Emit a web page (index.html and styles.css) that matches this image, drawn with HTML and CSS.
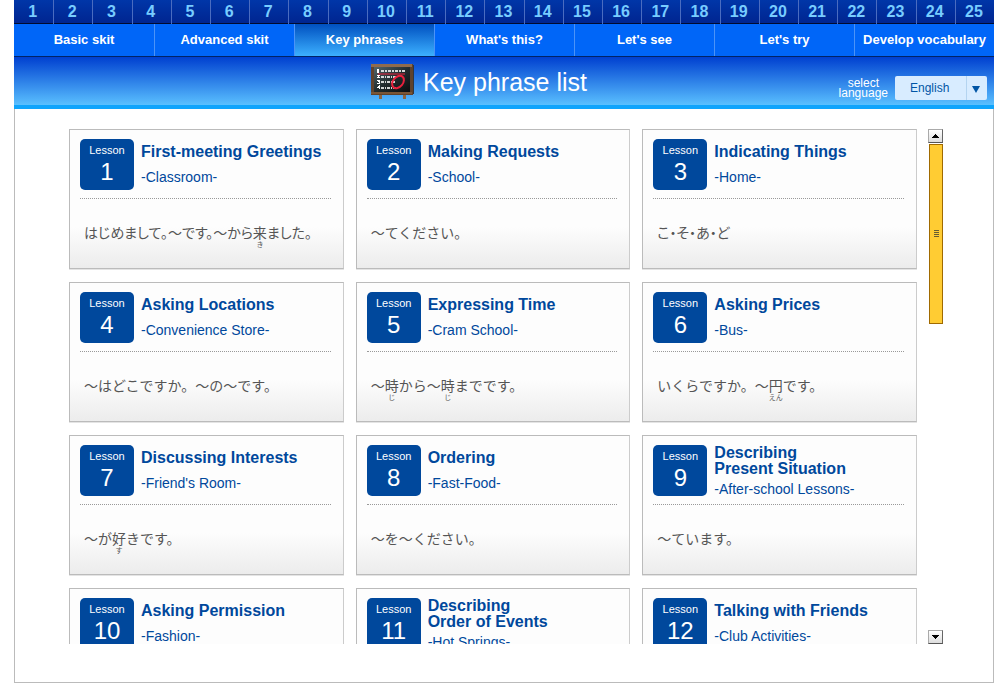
FILE: index.html
```html
<!DOCTYPE html>
<html lang="en">

<head>
    <meta charset="UTF-8">
    <meta name="viewport" content="width=device-width, initial-scale=1.0">
    <title>Key phrase list</title>
    <link rel="stylesheet" href="styles.css">
</head>

<body>
    <nav class="lessons" aria-label="Lessons">
        <a href="#1">1</a>
        <a href="#2">2</a>
        <a href="#3">3</a>
        <a href="#4">4</a>
        <a href="#5">5</a>
        <a href="#6">6</a>
        <a href="#7">7</a>
        <a href="#8">8</a>
        <a href="#9">9</a>
        <a href="#10">10</a>
        <a href="#11">11</a>
        <a href="#12">12</a>
        <a href="#13">13</a>
        <a href="#14">14</a>
        <a href="#15">15</a>
        <a href="#16">16</a>
        <a href="#17">17</a>
        <a href="#18">18</a>
        <a href="#19">19</a>
        <a href="#20">20</a>
        <a href="#21">21</a>
        <a href="#22">22</a>
        <a href="#23">23</a>
        <a href="#24">24</a>
        <a href="#25">25</a>
    </nav>

    <nav class="tabs" aria-label="Sections">
        <a href="#basic">Basic skit</a>
        <a href="#advanced">Advanced skit</a>
        <a href="#phrases" class="active">Key phrases</a>
        <a href="#what">What's this?</a>
        <a href="#see">Let's see</a>
        <a href="#try">Let's try</a>
        <a href="#vocabulary">Develop vocabulary</a>
    </nav>

    <header class="header">
        <div class="title">
            <svg class="board" width="44" height="37" viewBox="0 0 44 37" aria-hidden="true">
                <defs>
                    <linearGradient id="slate" x1="0" y1="0" x2="1" y2="1">
                        <stop offset="0" stop-color="#52666a" />
                        <stop offset="0.5" stop-color="#222c2f" />
                        <stop offset="1" stop-color="#0b0d0e" />
                    </linearGradient>
                </defs>
                <path d="M8 30h3v6h-3zM32 30h3v6h-3z" fill="#8c6542" />
                <path d="M41 2h2v29h-2z" fill="#33363f" />
                <path d="M0 1h42v31h-42z" fill="#5f422d" />
                <path d="M0 1h41v3h-41z" fill="#8f6b4c" />
                <path d="M0 29h41v2h-41z" fill="#7a5536" />
                <path d="M3 4h36v25h-36z" fill="url(#slate)" />
                <g fill="#fff">
                    <path d="M6 6h2v4h-2zM6 12h3v1h-1v1h1v1h-3v-1h1v-1h-1zM6 17h3v4h-3v-1h2v-1h-1v-1h-1zM8 22h1v4h-1v-1h-2v-1h1v-1h1z" />
                </g>
                <g fill="none" stroke="#fff" stroke-opacity="0.8" stroke-width="2">
                    <path d="M10 8h24" stroke-dasharray="3 1 2 1" />
                    <path d="M10 14h16M10 19h14M10 25h17" stroke-dasharray="3 1 1 1" />
                </g>
                <g fill="none" stroke="#e8203c">
                    <path d="M7 11h27" />
                    <ellipse cx="27" cy="19" rx="7" ry="5" transform="rotate(-50 27 19)" stroke-width="2" />
                </g>
            </svg>
            <h1>Key phrase list</h1>
        </div>
        <div class="language">
            <label for="language">select<br>language</label>
            <div class="select">
                <select id="language">
                    <option>English</option>
                </select>
                <svg width="8" height="7" viewBox="0 0 8 7" aria-hidden="true">
                    <path d="M0 0h8l-4 7z" fill="#0055a5" />
                </svg>
            </div>
        </div>
    </header>

    <main class="content">
        <div class="list">
            <a class="card" href="#1">
                <div class="top">
                    <div class="badge">Lesson <b>1</b></div>
                    <div class="name">
                        <h2>First-meeting Greetings</h2>
                        <p>-Classroom-</p>
                    </div>
                </div>
                <p class="phrase tight" lang="ja">はじめまして。～です。～から<ruby>来<rt>き</rt></ruby>ました。</p>
            </a>
            <a class="card" href="#2">
                <div class="top">
                    <div class="badge">Lesson <b>2</b></div>
                    <div class="name">
                        <h2>Making Requests</h2>
                        <p>-School-</p>
                    </div>
                </div>
                <p class="phrase" lang="ja">～てください。</p>
            </a>
            <a class="card" href="#3">
                <div class="top">
                    <div class="badge">Lesson <b>3</b></div>
                    <div class="name">
                        <h2>Indicating Things</h2>
                        <p>-Home-</p>
                    </div>
                </div>
                <p class="phrase tight" lang="ja">こ・そ・あ・ど</p>
            </a>
            <a class="card" href="#4">
                <div class="top">
                    <div class="badge">Lesson <b>4</b></div>
                    <div class="name">
                        <h2>Asking Locations</h2>
                        <p>-Convenience Store-</p>
                    </div>
                </div>
                <p class="phrase" lang="ja">～はどこですか。～の～です。</p>
            </a>
            <a class="card" href="#5">
                <div class="top">
                    <div class="badge">Lesson <b>5</b></div>
                    <div class="name">
                        <h2>Expressing Time</h2>
                        <p>-Cram School-</p>
                    </div>
                </div>
                <p class="phrase" lang="ja">～<ruby>時<rt>じ</rt></ruby>から～<ruby>時<rt>じ</rt></ruby>までです。</p>
            </a>
            <a class="card" href="#6">
                <div class="top">
                    <div class="badge">Lesson <b>6</b></div>
                    <div class="name">
                        <h2>Asking Prices</h2>
                        <p>-Bus-</p>
                    </div>
                </div>
                <p class="phrase" lang="ja">いくらですか。～<ruby>円<rt>えん</rt></ruby>です。</p>
            </a>
            <a class="card" href="#7">
                <div class="top">
                    <div class="badge">Lesson <b>7</b></div>
                    <div class="name">
                        <h2>Discussing Interests</h2>
                        <p>-Friend's Room-</p>
                    </div>
                </div>
                <p class="phrase" lang="ja">～が<ruby>好<rt>す</rt></ruby>きです。</p>
            </a>
            <a class="card" href="#8">
                <div class="top">
                    <div class="badge">Lesson <b>8</b></div>
                    <div class="name">
                        <h2>Ordering</h2>
                        <p>-Fast-Food-</p>
                    </div>
                </div>
                <p class="phrase" lang="ja">～を～ください。</p>
            </a>
            <a class="card" href="#9">
                <div class="top">
                    <div class="badge">Lesson <b>9</b></div>
                    <div class="name">
                        <h2>Describing<br>Present Situation</h2>
                        <p>-After-school Lessons-</p>
                    </div>
                </div>
                <p class="phrase" lang="ja">～ています。</p>
            </a>
            <a class="card" href="#10">
                <div class="top">
                    <div class="badge">Lesson <b>10</b></div>
                    <div class="name">
                        <h2>Asking Permission</h2>
                        <p>-Fashion-</p>
                    </div>
                </div>
            </a>
            <a class="card" href="#11">
                <div class="top">
                    <div class="badge">Lesson <b>11</b></div>
                    <div class="name">
                        <h2>Describing<br>Order of Events</h2>
                        <p>-Hot Springs-</p>
                    </div>
                </div>
            </a>
            <a class="card" href="#12">
                <div class="top">
                    <div class="badge">Lesson <b>12</b></div>
                    <div class="name">
                        <h2>Talking with Friends</h2>
                        <p>-Club Activities-</p>
                    </div>
                </div>
            </a>
        </div>

        <div class="scroller">
            <button type="button" aria-label="Scroll up">
                <svg width="7" height="4" viewBox="0 0 7 4" aria-hidden="true">
                    <path d="M3 0h1v1h1v1h1v1h1v1h-7v-1h1v-1h1v-1h1z" />
                </svg>
            </button>
            <div class="track">
                <div class="thumb">
                    <svg width="5" height="7" viewBox="0 0 5 7" aria-hidden="true">
                        <path d="M0 0h5v1h-5zM0 2h5v1h-5zM0 4h5v1h-5zM0 6h5v1h-5z" fill="#665c33" />
                    </svg>
                </div>
            </div>
            <button type="button" aria-label="Scroll down">
                <svg width="7" height="4" viewBox="0 0 7 4" aria-hidden="true">
                    <path d="M0 0h7v1h-1v1h-1v1h-1v1h-1v-1h-1v-1h-1v-1h-1z" />
                </svg>
            </button>
        </div>
    </main>
</body>

</html>
```

FILE: styles.css
```css
:root {
    --navy: #00489c;
    --blue: #0066f8;
    --line: #bbb;
}

* {
    box-sizing: border-box;
}

body {
    display: flex;
    flex-direction: column;
    height: 100vh;
    margin: 0 14px;
    background: #fff;
    font-family: "Liberation Sans", Arial, sans-serif;
}

h1,
h2,
p {
    margin: 0;
}

a {
    color: inherit;
    text-decoration: none;
}

/* lesson numbers */
.lessons {
    display: grid;
    grid-template-columns: repeat(25, 1fr);
    height: 24px;
    border-bottom: 1px solid #000b30;
    background: linear-gradient(#0036a8, #002590);
    color: #7cf;
    font-size: 16px;
    font-weight: bold;
    line-height: 24px;
    text-align: center;
}

.lessons a {
    padding-right: 2px;
}

.lessons a + a {
    border-left: 1px solid #4a6cc0;
}

/* section tabs */
.tabs {
    display: grid;
    grid-template-columns: repeat(7, 1fr);
    height: 33px;
    border-bottom: 1px solid #002468;
    background: var(--blue);
    color: #fff;
    font-size: 13px;
    font-weight: bold;
    line-height: 32px;
    text-align: center;
    white-space: nowrap;
}

.tabs a + a {
    border-left: 1px solid #4b93f8;
}

.tabs .active {
    background: linear-gradient(#0050c0, #3cb0ff);
}

/* page header */
.header {
    display: grid;
    grid-template-columns: 1fr auto 1fr;
    align-items: center;
    height: 52px;
    border-bottom: 4px solid #0fa4fc;
    background: linear-gradient(#0040d0, #5ac0ff);
    color: #fff;
}

.title {
    display: flex;
    grid-column: 2;
    align-items: center;
    gap: 8px;
    margin-right: 50px;
}

.title h1 {
    padding-top: 2px;
    font-size: 25px;
    font-weight: normal;
    line-height: 30px;
}

.language {
    display: flex;
    align-items: center;
    align-self: end;
    justify-content: flex-end;
    gap: 7px;
    padding: 0 7px 5px 0;
}

.language label {
    font-size: 12px;
    line-height: 10px;
    text-align: center;
}

.select {
    display: grid;
    align-items: center;
    width: 92px;
}

.select select,
.select svg {
    grid-area: 1 / 1;
}

.select select {
    appearance: none;
    width: 100%;
    height: 24px;
    padding: 0 0 0 15px;
    border: 0;
    border-radius: 2px;
    background: linear-gradient(to right, #d8ecff 71px, #b4d4f0 71px, #b4d4f0 72px, #d8ecff 72px);
    color: #0055a5;
    font-family: inherit;
    font-size: 12px;
}

.select svg {
    justify-self: end;
    margin-top: 2px;
    margin-right: 7px;
    pointer-events: none;
}

/* lesson list */
.content {
    display: flex;
    flex: 1;
    gap: 11px;
    min-height: 0;
    padding: 20px 50px 38px 54px;
    border: 1px solid var(--line);
    border-top: 0;
}

.list {
    display: grid;
    flex: 1;
    grid-template-columns: repeat(3, 1fr);
    align-content: start;
    gap: 13px 12px;
    overflow: hidden;
}

.card {
    min-height: 140px;
    padding: 9px 12px 0 10px;
    border: 1px solid var(--line);
    border-right-color: #ccc;
    background: linear-gradient(#fdfdfd 70%, #ececec);
    box-shadow: 0 1px #e4e4e4;
    color: var(--navy);
}

.top {
    display: flex;
    gap: 7px;
    padding-bottom: 8px;
    border-bottom: 1px dotted #999;
}

.badge {
    width: 54px;
    height: 51px;
    padding-top: 4px;
    border-radius: 5px;
    background: var(--navy);
    color: #fff;
    font-size: 11px;
    line-height: 14px;
    text-align: center;
}

.badge b {
    display: block;
    font-size: 24px;
    font-weight: normal;
    line-height: 30px;
}

.name {
    display: flex;
    flex-direction: column;
    justify-content: space-evenly;
    gap: 4px;
    height: 51px;
    white-space: nowrap;
}

.name h2 {
    font-size: 16px;
    line-height: 16px;
}

.name p {
    font-size: 14px;
    line-height: 16px;
}

.phrase {
    padding: 23px 0 0 4px;
    color: #555;
    font-family: "Noto Sans CJK JP", sans-serif;
    font-size: 14px;
    line-height: 20px;
    white-space: nowrap;
}

.tight {
    font-feature-settings: "palt";
}

ruby {
    ruby-position: under;
}

rt {
    font-size: 7px;
    line-height: 10px;
}

/* scroll bar */
.scroller {
    display: flex;
    flex-direction: column;
    width: 15px;
}

.scroller button {
    display: flex;
    align-items: center;
    justify-content: center;
    width: 15px;
    height: 14px;
    padding: 0;
    border: 1px solid #999;
    border-color: #aaa #666 #555 #aaa;
    background: linear-gradient(#fff, #ddd);
}

.track {
    flex: 1;
    padding: 1px 0 0 1px;
}

.thumb {
    display: flex;
    align-items: center;
    justify-content: center;
    height: 37%;
    border: 1px solid #a06a00;
    background: #fc3;
}
```
